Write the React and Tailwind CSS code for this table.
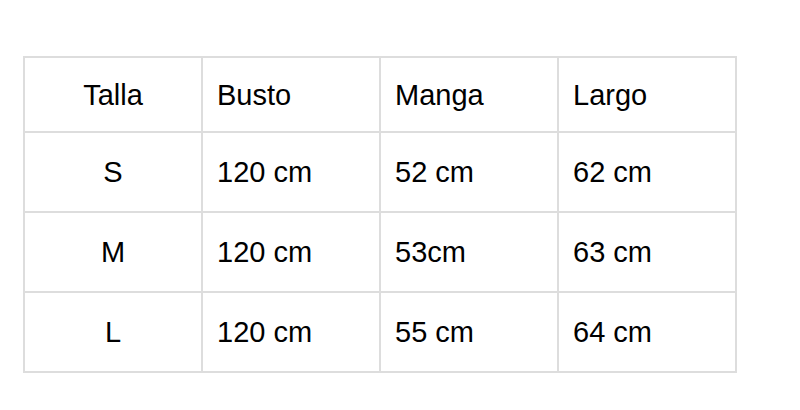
import React from 'react'

const rows = [
  ['Talla', 'Busto', 'Manga', 'Largo'],
  ['S', '120 cm', '52 cm', '62 cm'],
  ['M', '120 cm', '53cm', '63 cm'],
  ['L', '120 cm', '55 cm', '64 cm'],
]

const heights = ['h-[75px]', 'h-[80px]', 'h-[80px]', 'h-[78px]']

const App = () => (
  <div className="w-[800px] h-[410px] bg-white pt-[56px] pl-[23px]" style={{ fontFamily: '"Liberation Sans", Arial, sans-serif' }}>
    <div className="grid grid-cols-[178px_178px_178px_176px] w-[714px] border-2 border-[#dddddd] text-[29px] text-black">
      {rows.map((row, r) =>
        row.map((cell, c) => (
          <div
            key={r + '-' + c}
            className={[
              'flex items-center pt-[2px]',
              heights[r],
              c < 3 ? 'border-r-2 border-[#dddddd]' : '',
              r < 3 ? 'border-b-2 border-[#dddddd]' : '',
              c === 0 ? 'justify-center' : 'pl-[14px]',
            ].join(' ')}
          >
            {cell}
          </div>
        ))
      )}
    </div>
  </div>
)

export default App
